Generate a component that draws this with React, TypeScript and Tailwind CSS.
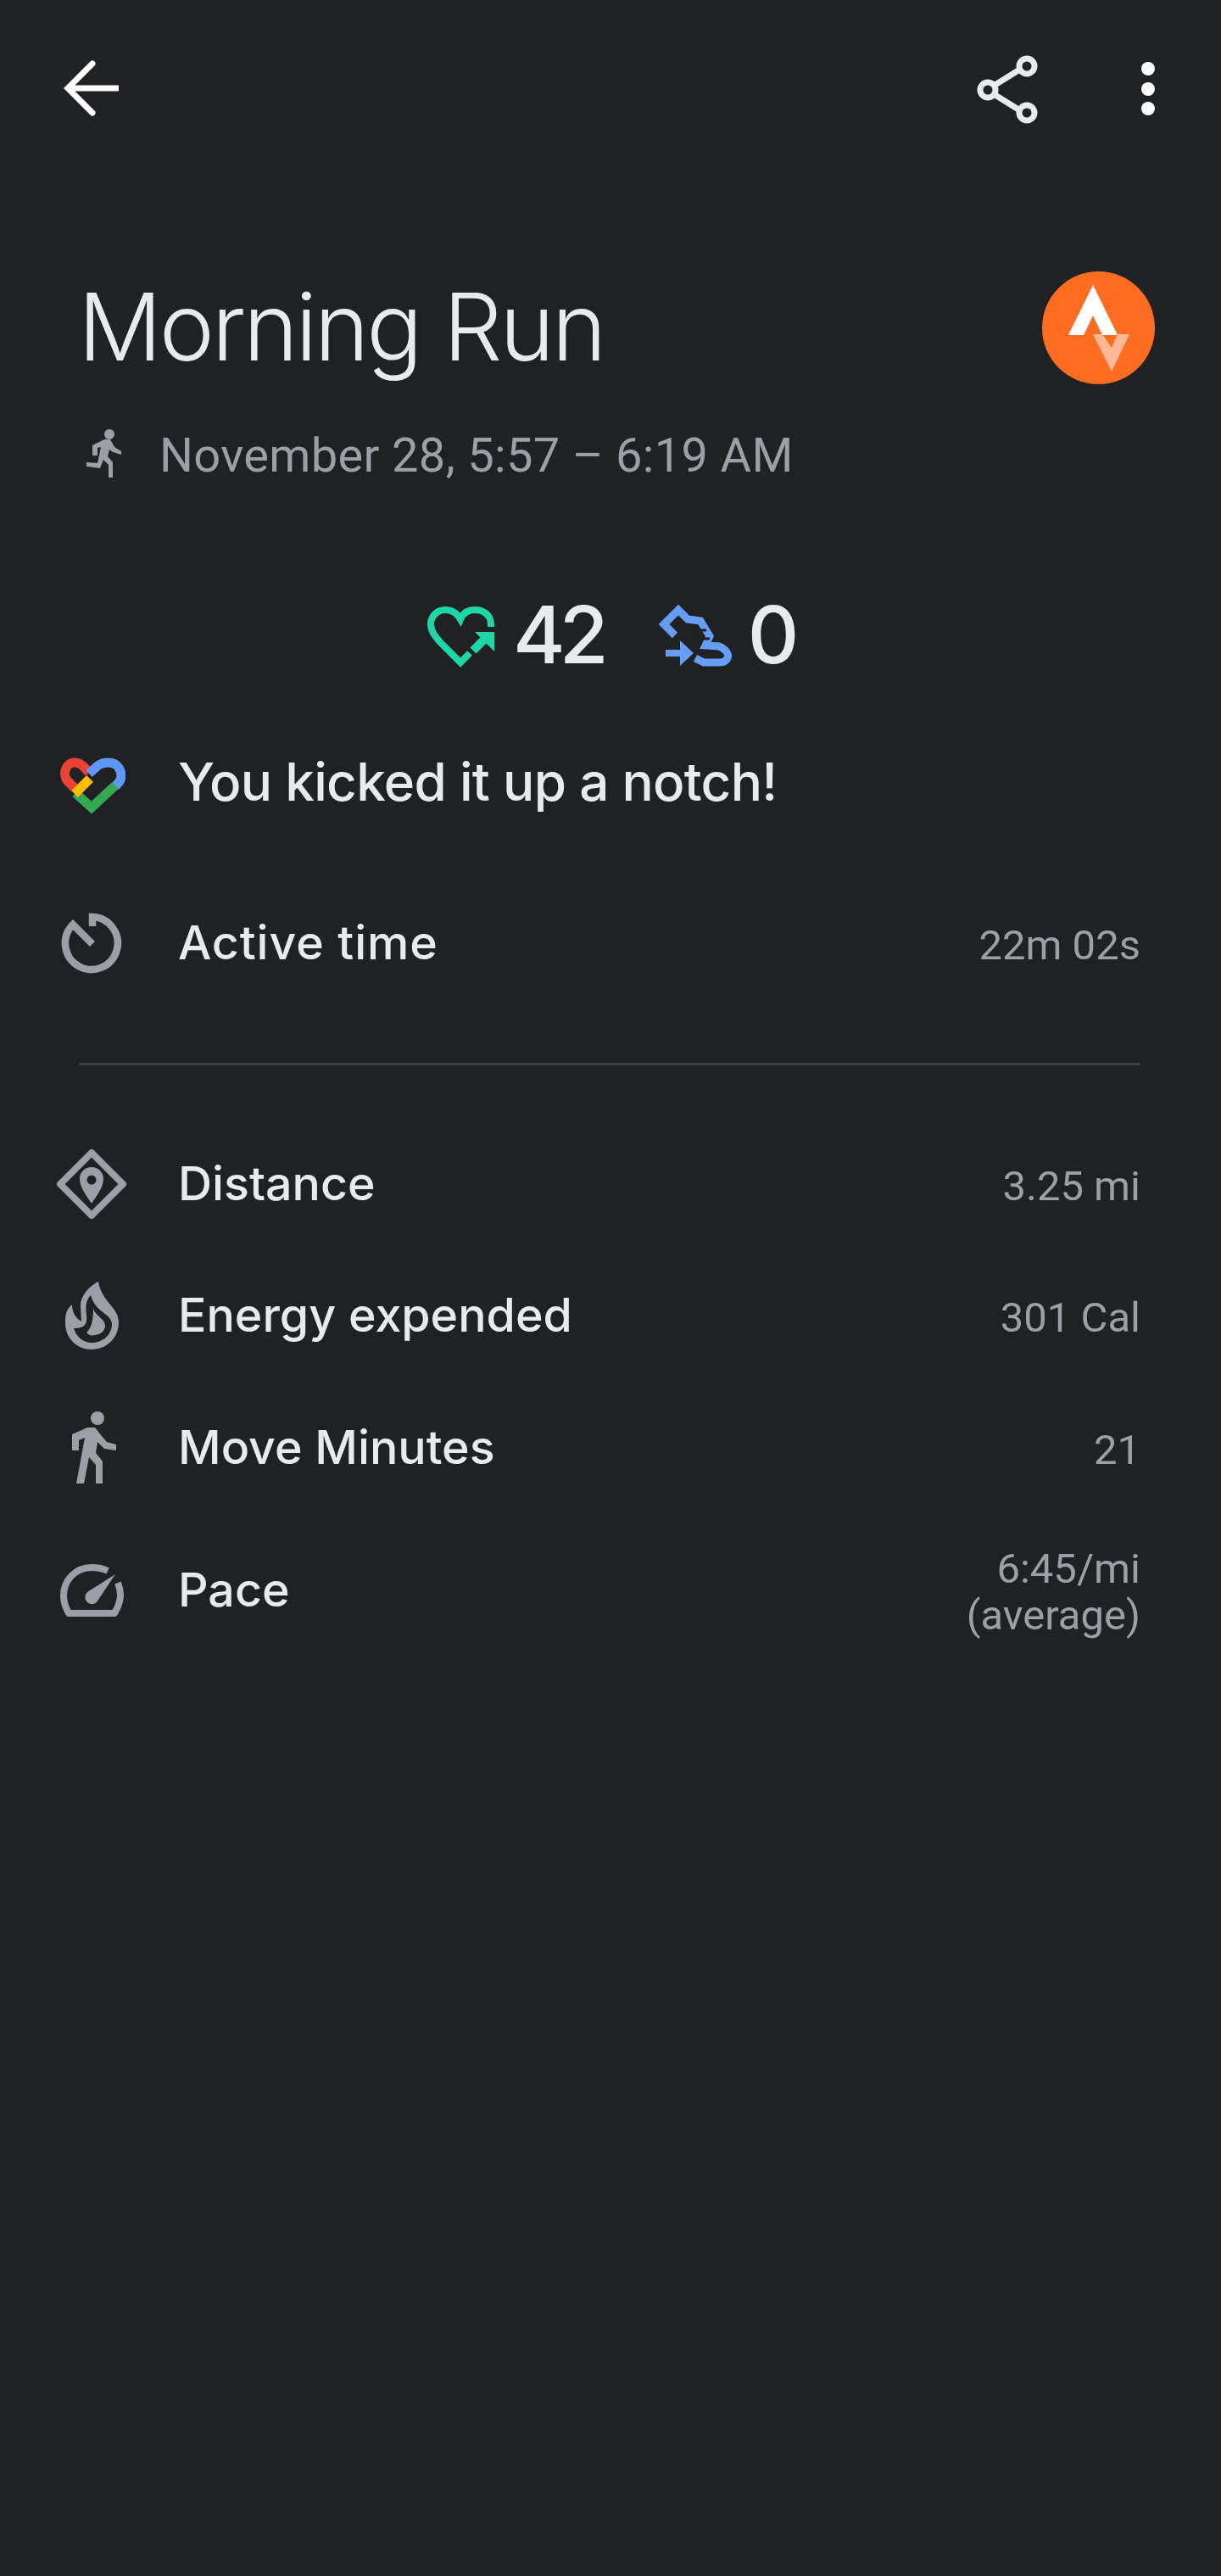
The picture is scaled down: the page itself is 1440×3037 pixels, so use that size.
import type { ReactNode } from "react";

const HEADING = "font-['Inter',sans-serif]";
const BODY = "font-['Roboto',sans-serif]";
const ICON_GREY = "#9aa0a6";

function BackIcon() {
	return (
		<svg width="96" height="96" viewBox="0 0 96 96" fill="none" stroke="#fff" strokeWidth="7">
			<path d="M80 48H22" />
			<path d="M49 19L20 48L49 77" strokeLinecap="round" />
		</svg>
	);
}

function ShareIcon() {
	return (
		<svg width="96" height="96" viewBox="0 0 96 96" fill="none" stroke="#e8eaed" strokeWidth="7">
			<path d="M21 50L66 22M21 50L66 78" />
			<circle cx="22" cy="50" r="9" fill="#202123" />
			<circle cx="68" cy="22" r="9" fill="#202123" />
			<circle cx="68" cy="77" r="9" fill="#202123" />
		</svg>
	);
}

function MoreIcon() {
	return (
		<svg width="32" height="80" viewBox="0 0 32 80" fill="#fff">
			<circle cx="16" cy="17" r="8" />
			<circle cx="16" cy="41" r="8" />
			<circle cx="16" cy="64" r="8" />
		</svg>
	);
}

function StravaBadge() {
	return (
		<svg width="133" height="133" viewBox="0 0 133 133">
			<circle cx="66.5" cy="66.5" r="66.5" fill="#fc6d22" />
			<path d="M60 16L31 75H49L60 52L71 75H89Z" fill="#fff" />
			<path d="M60 74H103L82 118L60 74ZM71 74L82 90L89 74Z" fill="#fdb897" fillRule="evenodd" />
		</svg>
	);
}

function RunnerIcon() {
	return (
		<svg width="48" height="64" viewBox="0 0 48 64" fill={ICON_GREY}>
			<circle cx="32" cy="9" r="6" />
			<path d="M12 22L26 15H33L38 24L46 29V33L36 30L32 27L30 35L36 42V60H31V45L25 39L21 49L5 47V42L18 43L22 24L18 25V34H12Z" />
		</svg>
	);
}

function HeartPointsIcon() {
	return (
		<svg width="90" height="90" viewBox="0 0 90 90" fill="none">
			<path
				d="M79 36V33C79 22 70 16 60 16C52 16 46 20 43 27C39 20 33 16 25 16C15 16 8 24 8 33C8 41 13 47 20 55L43 78L54 67"
				stroke="#1fd6a8"
				strokeWidth="8"
			/>
			<path d="M60 42H83V65Z" fill="#1fd6a8" />
			<path d="M58 64L72 50" stroke="#1fd6a8" strokeWidth="10" />
		</svg>
	);
}

function StepsIcon() {
	return (
		<svg width="95" height="90" viewBox="0 0 95 90" fill="none">
			<path
				d="M21 46L8 33L25 16L36 27L51 29L62 47L57 58L73 59C81 62 85 68 83 73C81 77 78 78 74 78H55L45 73"
				stroke="#669df6"
				strokeWidth="9"
			/>
			<path d="M44 40H58M46 50H62" stroke="#202123" strokeWidth="3" />
			<path d="M10 67H28" stroke="#669df6" strokeWidth="8" />
			<path d="M27 52L43 67L27 82Z" fill="#669df6" />
		</svg>
	);
}

function FitLogo() {
	return (
		<svg width="80" height="80" viewBox="0 0 80 80" fill="none" strokeWidth="11">
			<path d="M20 43L12 35C5 28 9 13 20 13C27 13 31 18 37 25" stroke="#ea4335" />
			<path d="M37 26L47 17C52 13 56 13 60 13C70 13 75 21 75 29C75 34 72 37 68 41" stroke="#5e97f6" />
			<path d="M21 49L40 66L68 40" stroke="#34a853" />
			<path d="M38 32L20 50" stroke="#fbbc04" />
		</svg>
	);
}

function TimerIcon() {
	return (
		<svg width="80" height="80" viewBox="0 0 80 80" fill="none" stroke={ICON_GREY} strokeWidth="8.5">
			<path d="M41 20V9A31 31 0 1 1 18 18L41 41" />
		</svg>
	);
}

function DistanceIcon() {
	return (
		<svg className="overflow-visible" width="80" height="80" viewBox="0 0 80 80" fill={ICON_GREY}>
			<path d="M40 3L77 40L40 77L3 40Z" fill="none" stroke={ICON_GREY} strokeWidth="8" strokeLinejoin="round" />
			<path d="M40 20C31 20 26 27 26 34C26 44 35 55 40 63C45 55 54 44 54 34C54 27 49 20 40 20Z" />
			<circle cx="40" cy="35" r="5.5" fill="#202123" />
		</svg>
	);
}

function FlameIcon() {
	return (
		<svg width="80" height="80" viewBox="0 0 80 80">
			<path
				d="M48 0C36 6 26 18 27 30L28 47C20 42 17 35 17 27C8 34 9 45 9 49C9 67 23 80 40 80C58 80 72 66 72 48C72 30 52 24 48 0Z"
				fill={ICON_GREY}
			/>
			<path d="M39 16C33 22 33 30 34 40C35 50 32 55 19 55C22 65 30 72 40 72C54 72 64 62 64 50C64 38 44 36 39 16Z" fill="#202123" />
			<path d="M42 32C42 45 40 55 34 60C36 63 40 64 44 63C51 62 56 58 56 52C56 44 46 42 42 32Z" fill={ICON_GREY} />
		</svg>
	);
}

function WalkerIcon() {
	return (
		<svg className="overflow-visible" width="80" height="80" viewBox="0 0 80 80" fill={ICON_GREY}>
			<circle cx="47" cy="5" r="8" />
			<path d="M17 24L35 16H44L52 26L58 33L69 36V43L55 41L47 33L45 46L53 56V82H45V60L37 51L31 82H22L32 28L25 31V43H17Z" />
		</svg>
	);
}

function PaceIcon() {
	return (
		<svg width="80" height="80" viewBox="0 0 80 80" fill="none">
			<path
				d="M59 17C53 14 47 13 40 13C21 13 7 28 7 46C7 54 9 60 13 67H67C71 60 74 54 74 46C74 41 73 36 71 31"
				stroke={ICON_GREY}
				strokeWidth="8"
				strokeLinejoin="round"
			/>
			<path d="M68 21L46 54A8 8 0 1 1 35 42Z" fill={ICON_GREY} />
		</svg>
	);
}

function MetricRow({
	icon,
	label,
	value,
	className,
	labelClassName = "mb-[3px] text-[55.5px]",
}: {
	icon: ReactNode;
	label: string;
	value?: ReactNode;
	className: string;
	labelClassName?: string;
}) {
	return (
		<div className={`flex h-[100px] items-center pl-[68px] pr-[95px] ${className}`}>
			<div className="mr-[62px] h-[80px] w-[80px] shrink-0">{icon}</div>
			<div className={`${HEADING} flex-1 font-medium leading-none text-[#e8eaed] ${labelClassName}`}>{label}</div>
			{value && (
				<div className={`${BODY} mt-[4px] text-right text-[49px] leading-[55px] text-[#9aa0a6]`}>{value}</div>
			)}
		</div>
	);
}

export default function App() {
	return (
		<div className="h-[3037px] w-[1440px] overflow-hidden bg-[#202123]">
			<header className="flex h-[208px] items-center pl-[60px] pr-[70px]">
				<BackIcon />
				<div className="ml-auto mr-[99px]">
					<ShareIcon />
				</div>
				<MoreIcon />
			</header>

			<div className="mt-[112px] flex h-[133px] items-center justify-between pl-[92px] pr-[78px]">
				<h1 className={`${HEADING} mb-[3px] text-[110px] font-[350] leading-none tracking-[-3.3px] text-[#e8eaed]`}>Morning Run</h1>
				<StravaBadge />
			</div>

			<div className="mt-[50px] flex h-[64px] items-center pl-[97px]">
				<RunnerIcon />
				<span className={`${BODY} ml-[43px] mt-[4px] text-[56px] leading-none tracking-[0.33px] text-[#9aa0a6]`}>
					November 28, 5:57 – 6:19 AM
				</span>
			</div>

			<div className={`${HEADING} mt-[133px] flex h-[96px] items-center pl-[500px] text-[94px] font-[550] leading-none text-[#e8eaed]`}>
				<HeartPointsIcon />
				<span className="ml-[15px] tracking-[-7px]">42</span>
				<div className="ml-[64px]">
					<StepsIcon />
				</div>
				<span className="ml-[12px]">0</span>
			</div>

			<MetricRow
				className="mt-[80px]"
				labelClassName="mb-[8px] text-[62px] tracking-[-0.7px]"
				icon={<FitLogo />}
				label="You kicked it up a notch!"
			/>
			<MetricRow
				className="mt-[86px]"
				labelClassName="mb-[3px] text-[55.5px] tracking-[0.9px]"
				icon={<TimerIcon />}
				label="Active time"
				value="22m 02s"
			/>

			<div className="ml-[93px] mr-[95px] mt-[91px] h-[3px] bg-[#3c4043]" />

			<MetricRow className="mt-[90px]" icon={<DistanceIcon />} label="Distance" value="3.25 mi" />
			<MetricRow className="mt-[55px]" icon={<FlameIcon />} label="Energy expended" value="301 Cal" />
			<MetricRow className="mt-[56px]" icon={<WalkerIcon />} label="Move Minutes" value="21" />
			<MetricRow
				className="mt-[68px]"
				icon={<PaceIcon />}
				label="Pace"
				value={
					<>
						6:45/mi
						<br />
						(average)
					</>
				}
			/>
		</div>
	);
}
